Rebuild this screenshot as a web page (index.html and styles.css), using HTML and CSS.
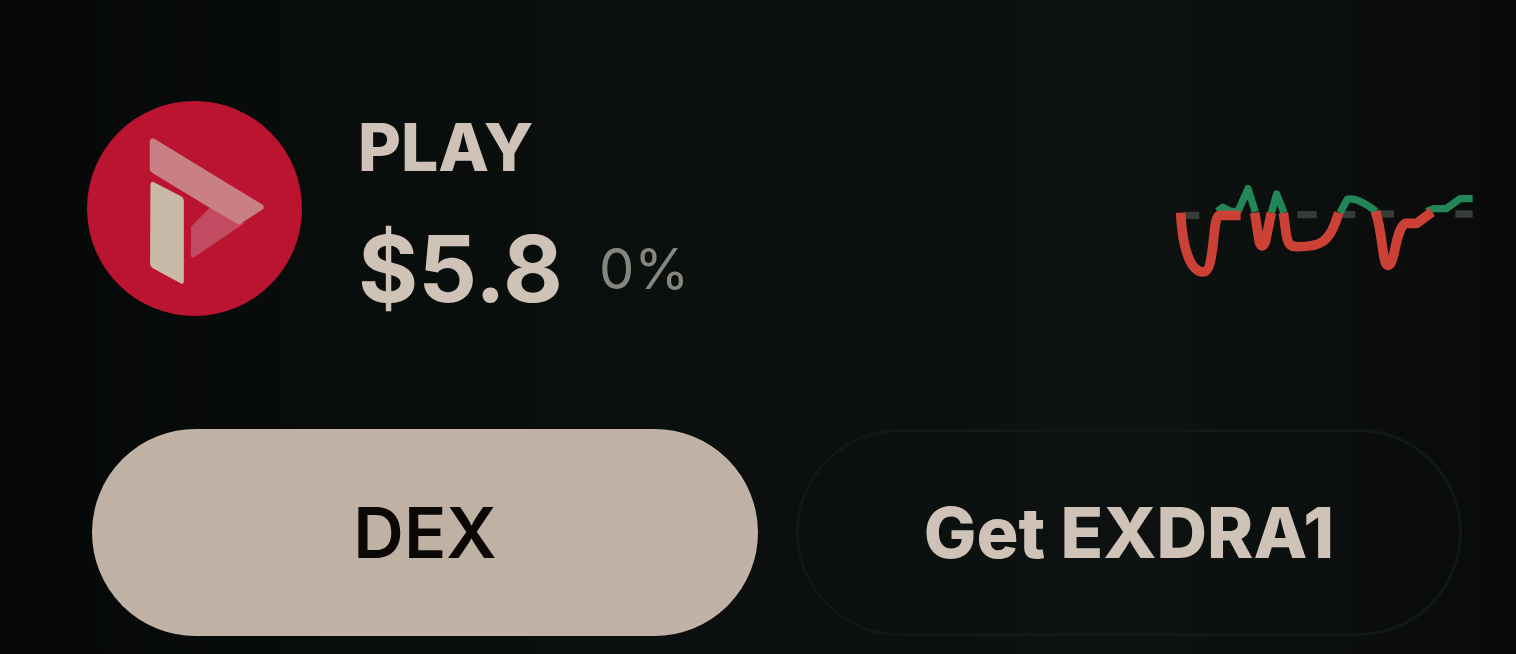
FILE: index.html
```html
<!DOCTYPE html>
<html lang="en">
<head>
<meta charset="utf-8">
<meta name="viewport" content="width=device-width, initial-scale=1">
<title>PLAY</title>
<link rel="stylesheet" href="styles.css">
</head>
<body>
<main class="card">
  <header class="token">
    <svg class="token-logo" viewBox="51 32 644 644" role="img" aria-label="PLAY logo">
      <circle cx="373" cy="354" r="322" fill="#ba1431"/>
      <path d="M363 408L420 350L522 398L372 500Q362 504 362 494Z" fill="#c24a61"/>
      <path d="M239 152Q242 139 254 146L577 343Q584 350 577 357L506 403L416 350L246 247Q239 243 239 236Z" fill="#c88085"/>
      <path d="M241 282Q242 270 253 276L334 318Q341 322 341 330V572Q341 583 331 578L247 532Q240 528 240 520Z" fill="#c9b9a9"/>
    </svg>
    <div class="token-info">
      <h1 class="token-name">PLAY</h1>
      <p class="token-quote">
        <span class="token-price">$5.8</span>
        <span class="token-change">0%</span>
      </p>
    </div>
    <svg class="sparkline" viewBox="0 -102 990 462" role="img" aria-label="Price history" fill="none" stroke-linejoin="round">
      <g stroke="#363b37" stroke-width="22">
        <path d="M70 136H118M412 134H470M540 134H586M648 132H702M886 132H938"/>
      </g>
      <g stroke="#238658" stroke-width="22">
        <path d="M172 124L188 112L212 124H234L264 56L286 126M334 128L350 72L372 128M540 128L562 88Q590 80 648 124M800 124L822 116H858L900 86H938"/>
      </g>
      <g stroke="#cc4136" stroke-width="29">
        <path d="M62 128C66 218 86 306 130 306C166 306 156 136 178 136H242M284 128L298 216Q306 240 316 216L334 128M370 128C380 190 376 230 406 230C480 232 510 220 536 128M646 124C670 190 666 286 684 286C706 286 704 180 736 160H770L816 126"/>
      </g>
    </svg>
  </header>
  <div class="actions">
    <button class="action action-primary" type="button">DEX</button>
    <button class="action action-secondary" type="button">Get EXDRA1</button>
  </div>
</main>
</body>
</html>
```
FILE: styles.css
```css
* {
  box-sizing: border-box;
}

body {
  margin: 0;
  min-height: 100vh;
  background: linear-gradient(90deg, #060808 0%, #0a0f0d 35%, #0d1210 75%, #090b0a 100%);
  color: #cfc3b8;
  font-family: Inter, "Liberation Sans", sans-serif;
}

.card {
  display: flex;
  flex-direction: column;
  gap: 104px;
  padding: 101px 0 18px;
}

.token {
  display: flex;
  align-items: flex-start;
  gap: 56px;
  padding: 0 26px 0 87px;
}

.token-logo {
  flex: none;
  width: 215px;
  height: 215px;
}

.token-info {
  flex: 1;
  display: flex;
  flex-direction: column;
  gap: 20px;
}

.token-name {
  margin: 0;
  font-size: 66px;
  font-weight: 800;
  line-height: 92px;
}

.token-quote {
  display: flex;
  align-items: center;
  gap: 36px;
  margin: 0;
  line-height: 112px;
}

.token-price {
  font-size: 92px;
  font-weight: 700;
}

.token-change {
  color: #85877f;
  font-size: 56px;
  font-weight: 400;
}

.sparkline {
  flex: none;
  align-self: center;
  width: 330px;
  height: 154px;
}

.actions {
  display: grid;
  grid-template-columns: 1fr 1fr;
  gap: 38px;
  padding: 0 54px 0 92px;
}

.action {
  padding: 60px 24px;
  border: 3px solid transparent;
  border-radius: 104px;
  color: inherit;
  font-family: inherit;
  font-size: 70px;
  line-height: 81px;
}

.action-primary {
  border-color: #c0b2a5;
  background: #bfb1a3;
  color: #0b0705;
  font-weight: 600;
}

.action-secondary {
  border-color: #121815;
  background: transparent;
  font-weight: 800;
}
```
